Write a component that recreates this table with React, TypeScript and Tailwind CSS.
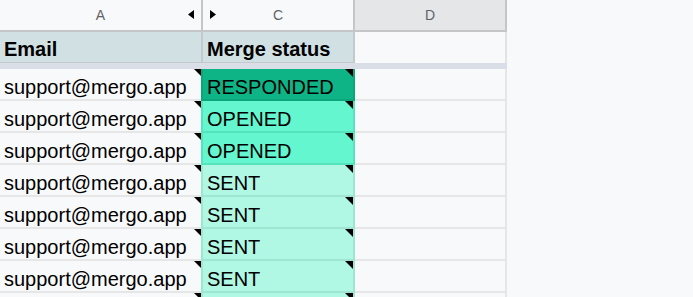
type Status = 'RESPONDED' | 'OPENED' | 'SENT';

interface MergeRow {
    email: string;
    status: Status;
}

// Cell colours for each merge status (conditional formatting)
const statusStyle: Record<Status, string> = {
    RESPONDED: 'bg-[#0fb486] border-[#0ca67b]',
    OPENED: 'bg-[#64f7cf] border-[#55e3bd]',
    SENT: 'bg-[#b0f8e3] border-[#9fe6d2]',
};

const rows: MergeRow[] = [
    { email: 'support@mergo.app', status: 'RESPONDED' },
    { email: 'support@mergo.app', status: 'OPENED' },
    { email: 'support@mergo.app', status: 'OPENED' },
    { email: 'support@mergo.app', status: 'SENT' },
    { email: 'support@mergo.app', status: 'SENT' },
    { email: 'support@mergo.app', status: 'SENT' },
    { email: 'support@mergo.app', status: 'SENT' },
    { email: 'support@mergo.app', status: 'SENT' },
];

// little black note marker in the top-right corner of a cell
const NoteMark = ({ size = 8 }: { size?: number }) => (
    <svg className="absolute top-0 right-0" width={size} height={size} viewBox="0 0 8 8">
        <polygon points="0,0 8,0 8,8" fill="#000" />
    </svg>
);

const App = () => {
    return (
        <div
            className="w-[693px] h-[297px] overflow-hidden bg-[#f8f9fa] text-black"
            style={{ fontFamily: '"Liberation Sans", Arial, sans-serif' }}
        >
            {/* column letters */}
            <div className="flex h-[32px] text-[14px] text-[#5f6368]">
                <div className="relative w-[203px] flex items-center justify-center border-r-2 border-b-2 border-[#c4c7c9] bg-[#f8f9fa]">
                    A
                    <svg className="absolute left-[188px] top-[10px]" width="6" height="9" viewBox="0 0 6 9">
                        <polygon points="6,0 6,9 0,4.5" fill="#000" />
                    </svg>
                </div>
                <div className="relative w-[152px] flex items-center justify-center border-r-2 border-b-2 border-[#c4c7c9] bg-[#f8f9fa]">
                    C
                    <svg className="absolute left-[7px] top-[10px]" width="6" height="9" viewBox="0 0 6 9">
                        <polygon points="0,0 0,9 6,4.5" fill="#000" />
                    </svg>
                </div>
                <div className="w-[152px] flex items-center justify-center border-r-2 border-b-2 border-[#c4c7c9] bg-[#e5e6e8]">
                    D
                </div>
            </div>

            {/* frozen header row */}
            <div className="flex h-[31px] text-[20px] font-bold leading-[23px]">
                <div className="w-[203px] flex items-end pl-1 pb-[1px] bg-[#d0e0e3] border-r-2 border-b border-[#c4c9cb]">
                    Email
                </div>
                <div className="w-[152px] flex items-end pl-1 pb-[1px] bg-[#d0e0e3] border-r-2 border-b border-[#c4c9cb]">
                    Merge status
                </div>
                <div className="w-[152px] border-r-2 border-[#e2e2e2]" />
            </div>

            {/* freeze divider */}
            <div className="flex h-[6px]">
                <div className="w-[507px] bg-[#dadee6]" />
            </div>

            {rows.map((row, i) => (
                <div key={i} className="flex h-[32px] text-[20px] leading-[23px]">
                    <div className="relative w-[201px] flex items-end pl-1 border-b-2 border-[#e6e6e6]">
                        {row.email}
                        <NoteMark size={7} />
                    </div>
                    <div className={`relative w-[154px] flex items-end pl-1 border-x-2 border-b-2 ${statusStyle[row.status]}`}>
                        {row.status}
                        <NoteMark />
                    </div>
                    <div className="w-[152px] border-r-2 border-b-2 border-[#e6e6e6]" />
                </div>
            ))}
        </div>
    );
};

export default App;
